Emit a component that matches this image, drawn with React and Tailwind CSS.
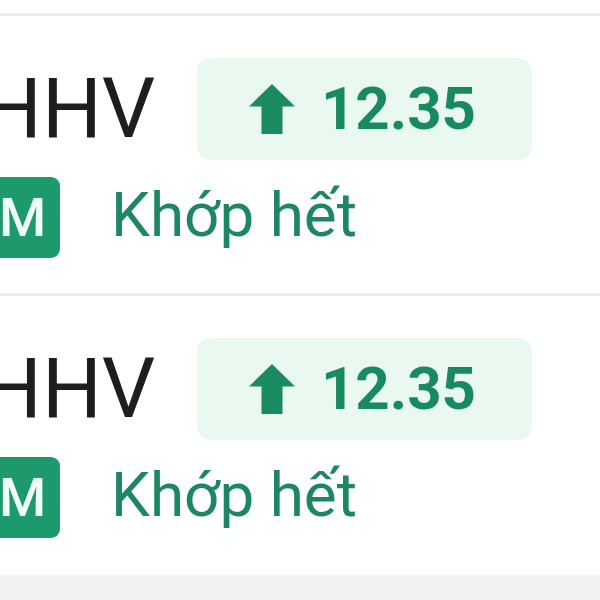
import React from "react";

function UpArrow() {
  return (
    <svg width="46" height="50" viewBox="0 0 46 50" className="shrink-0">
      <path d="M23 0 L46 22.5 L33.5 22.5 L33.5 50 L12.5 50 L12.5 22.5 L0 22.5 Z" fill="#1a8a5f" />
    </svg>
  );
}

function Row() {
  return (
    <div className="h-[277px] bg-white pt-[42px]">
      <div className="flex items-center">
        <div className="w-[215px]">
          <span className="block text-[84px] leading-none text-[#1e1e1e]">HHV</span>
        </div>
        <div className="flex h-[102px] w-[335px] items-center justify-center gap-[26px] rounded-[14px] bg-[#eaf9ef] pr-[4px]">
          <UpArrow />
          <span className="text-[60px] font-bold leading-none text-[#188a5f]">12.35</span>
        </div>
      </div>
      <div className="mt-[17px] flex items-center">
        <div className="ml-[3px] flex h-[81px] w-[75px] items-center justify-center rounded-[9px] bg-[#1c9a6b]">
          <span className="text-[54px] font-medium leading-none text-[#effff7]">M</span>
        </div>
        <span className="ml-[51px] pb-[6px] text-[62px] leading-none text-[#1d8765]">Khớp hết</span>
      </div>
    </div>
  );
}

export default function App() {
  return (
    <div className="h-[600px] w-[600px] overflow-hidden bg-white" style={{ fontFamily: "Roboto, 'Noto Sans', sans-serif" }}>
      <div className="ml-[-18px] w-[636px]">
        <div className="h-[13px] bg-white" />
        <div className="h-[3px] bg-[#ececec]" />
        <Row />
        <div className="h-[3px] bg-[#ececec]" />
        <Row />
        <div className="h-[2px] bg-white" />
        <div className="h-[30px] bg-[#f2f2f2]" />
      </div>
    </div>
  );
}
